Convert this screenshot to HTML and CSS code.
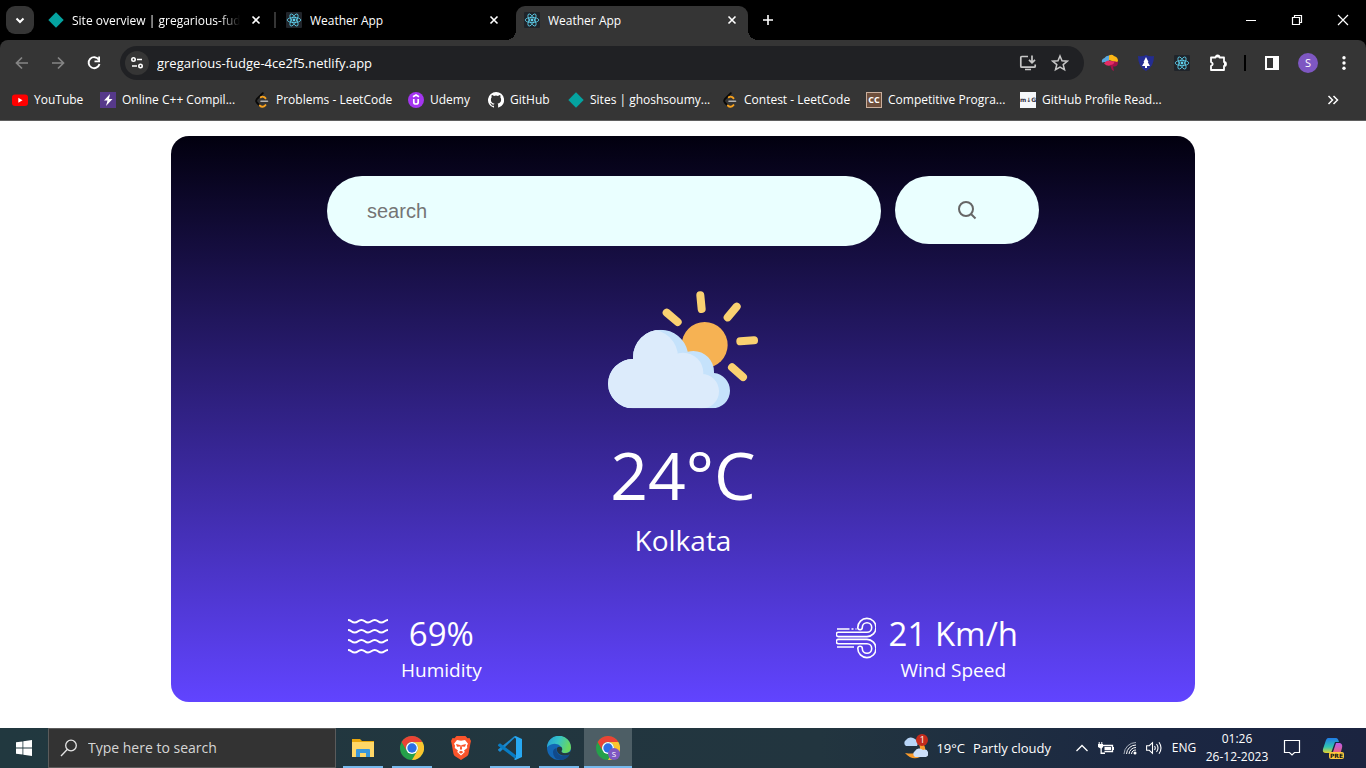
FILE: index.html
```html
<!DOCTYPE html>
<html lang="en">
<head>
<meta charset="utf-8">
<title>Weather App</title>
<link rel="stylesheet" href="styles.css">
</head>
<body>
<svg class="defs" aria-hidden="true">
  <symbol id="react" viewBox="0 0 16 16"><rect width="16" height="16" rx="1" fill="#20242a"/><g fill="none" stroke="#5fd3f0" stroke-width=".8"><ellipse cx="8" cy="8" rx="6.8" ry="2.6"/><ellipse cx="8" cy="8" rx="6.8" ry="2.6" transform="rotate(60 8 8)"/><ellipse cx="8" cy="8" rx="6.8" ry="2.6" transform="rotate(120 8 8)"/></g><circle cx="8" cy="8" r="1.4" fill="#5fd3f0"/></symbol>
  <symbol id="diamond" viewBox="0 0 16 16"><path d="M8 .3 15.7 8 8 15.7.3 8z" fill="#05a3a0"/></symbol>
  <symbol id="leet" viewBox="0 0 16 16"><g fill="none" stroke-width="1.900" stroke-linecap="round"><path d="M8.800 1.200 2.800 7.200Q1.500 9 2.800 10.500L5.500 13.300" stroke="#090909"/><path d="m11.500 6.300-1.300-1.200Q8.300 4 6.800 5.300M5.800 13.500q2.700 2.800 5.700-.4" stroke="#f5a01d"/><path d="M7 9.300h6.500" stroke="#b3b3b3" stroke-width="1.600"/></g></symbol>
  <symbol id="close" viewBox="0 0 16 16"><path d="m4.500 4.500 7 7m0-7-7 7" stroke="#fff" stroke-width="1.600"/></symbol>
  <symbol id="chrome" viewBox="0 0 24 24"><circle cx="12" cy="12" r="12" fill="#25a04a"/><path d="M1.600 6A12 12 0 0 1 22.400 6H12A6 6 0 0 0 6.800 15z" fill="#ea4335"/><path d="M22.400 6A12 12 0 0 1 12 24l5.200-9A6 6 0 0 0 12 6z" fill="#fcc52f"/><circle cx="12" cy="12" r="6" fill="#fff"/><circle cx="12" cy="12" r="4.700" fill="#2c6fe4"/></symbol>
</svg>

<header class="browser">
  <div class="tabstrip">
    <button class="tab-search" aria-label="Search tabs"><svg width="16" height="16" viewBox="0 0 16 16"><path d="m4.500 6.500 3.500 3.500 3.500-3.500" fill="none" stroke="#fff" stroke-width="2"/></svg></button>
    <div class="tab tab-divided"><svg class="fav"><use href="#diamond"/></svg><span class="tab-title tab-fade">Site overview | gregarious-fudge</span><button class="tab-close" aria-label="Close tab"><svg class="fav"><use href="#close"/></svg></button></div>
    <div class="tab"><svg class="fav"><use href="#react"/></svg><span class="tab-title">Weather App</span><button class="tab-close" aria-label="Close tab"><svg class="fav"><use href="#close"/></svg></button></div>
    <div class="tab tab-active"><svg class="fav"><use href="#react"/></svg><span class="tab-title">Weather App</span><button class="tab-close" aria-label="Close tab"><svg class="fav"><use href="#close"/></svg></button></div>
    <button class="new-tab" aria-label="New tab"><svg width="16" height="16" viewBox="0 0 16 16"><path d="M8 3v10M3 8h10" stroke="#fff" stroke-width="1.600"/></svg></button>
    <div class="window-controls">
      <button aria-label="Minimize"><svg width="12" height="12" viewBox="0 0 12 12"><path d="M1 6.500h10" stroke="#fff"/></svg></button>
      <button aria-label="Restore"><svg width="12" height="12" viewBox="0 0 12 12"><path d="M1.500 3.500h7v7h-7zM3.500 3.500v-2h7v7h-2" fill="none" stroke="#fff" stroke-width="1.200"/></svg></button>
      <button aria-label="Close"><svg width="12" height="12" viewBox="0 0 12 12"><path d="m1 1 10 10M11 1 1 11" stroke="#fff" stroke-width="1.200"/></svg></button>
    </div>
  </div>

  <div class="chrome-body">
    <div class="toolbar">
      <button class="tool" aria-label="Back"><svg width="16" height="16" viewBox="0 0 16 16"><path d="M14 8H3M8 2.500 2.500 8 8 13.500" fill="none" stroke="#858585" stroke-width="1.700"/></svg></button>
      <button class="tool" aria-label="Forward"><svg width="16" height="16" viewBox="0 0 16 16"><path d="M2 8h11M8 2.500 13.500 8 8 13.500" fill="none" stroke="#858585" stroke-width="1.700"/></svg></button>
      <button class="tool" aria-label="Reload"><svg width="16" height="16" viewBox="0 0 16 16"><path d="M12.800 4.700A5.500 5.500 0 1 0 13.500 9" fill="none" stroke="#fff" stroke-width="1.900"/><path d="M14 1.500v5.700H8.500V5.500h3.700v-4z" fill="#fff"/></svg></button>
      <div class="omnibox">
        <button class="site-info" aria-label="Site information"><svg width="16" height="16" viewBox="0 0 16 16"><g fill="none" stroke="#fff" stroke-width="1.600"><circle cx="4.500" cy="4.500" r="1.700"/><path d="M8 4.500h5M3 11h5"/><circle cx="11.500" cy="11" r="1.700"/></g></svg></button>
        <input class="address" type="text" aria-label="Address" value="gregarious-fudge-4ce2f5.netlify.app">
        <button class="omni-btn" aria-label="Install app"><svg width="18" height="18" viewBox="0 0 18 18"><path d="M9 2.500H2.800q-1 0-1 1v8.700q0 1 1 1h12.400q1 0 1-1V10.500M6 15.500h6M13 1.500v7M10 5.800l3 3 3-3" fill="none" stroke="#c7c7c7" stroke-width="1.700"/></svg></button>
        <button class="omni-btn" aria-label="Bookmark"><svg width="18" height="18" viewBox="0 0 18 18"><path d="m9 2 2 4.800 5.200.4-4 3.400 1.300 5.100L9 13l-4.500 2.700 1.300-5.100-4-3.400L7 6.800z" fill="none" stroke="#c7c7c7" stroke-width="1.500"/></svg></button>
      </div>
      <div class="extensions">
        <button class="tool" aria-label="Brain extension"><svg width="18" height="18" viewBox="0 0 18 18"><path d="M1 8.500Q0 5 3.500 4 5 1 9 1.500L8 8H4z" fill="#59a8df"/><path d="M8 1.500Q11 0 13 2q4 1 4 5-1 2-3 1L8 6z" fill="#fbb615"/><path d="M3 9.500Q6 5 9.500 7l5 .5q0 4-4 3.500-4 2-7.500-1.500z" fill="#e52c65"/><path d="M9 11q4 0 4.500-3.500L17 8q0 4-3 4.500h-2l1 4.500-2-1z" fill="#a3124b"/></svg></button>
        <button class="tool" aria-label="Shield extension"><svg width="16" height="16" viewBox="0 0 16 16"><path d="M8 0q4 2 8 1 0 11-8 15Q0 12 0 1q4 1 8-1z" fill="#242d91"/><path d="m8 2 2.500 5-.7.300L12 11 9 11v2H7v-2H4l2.200-3.700-.7-.3z" fill="#fff"/></svg></button>
        <button class="tool" aria-label="React Developer Tools"><svg class="fav"><use href="#react"/></svg></button>
        <button class="tool" aria-label="Extensions"><svg width="18" height="18" viewBox="0 0 18 18"><path d="M2 3.500h4.500a2 2 0 0 1 4 0H15V8a2 2 0 0 1 0 4v4H2v-4q3.500-2 0-4z" fill="none" stroke="#fff" stroke-width="1.800" stroke-linejoin="round"/><path d="M6.500 3.500a2 2 0 0 1 4 0zM15 8a2 2 0 0 1 0 4z" fill="#fff"/></svg></button>
        <span class="tool-divider"></span>
        <button class="tool" aria-label="Side panel"><svg width="16" height="16" viewBox="0 0 16 16"><rect x="2" y="2" width="12" height="12" fill="none" stroke="#fff" stroke-width="2"/><path d="M9 2h5v12H9z" fill="#fff"/></svg></button>
        <button class="tool" aria-label="Profile"><span class="avatar">S</span></button>
        <button class="tool" aria-label="Menu"><svg width="16" height="16" viewBox="0 0 16 16" fill="#fff"><circle cx="8" cy="2.700" r="1.700"/><circle cx="8" cy="8" r="1.700"/><circle cx="8" cy="13.300" r="1.700"/></svg></button>
      </div>
    </div>

    <nav class="bookmarks" aria-label="Bookmarks">
      <a class="bm bm-small" href="#"><svg class="fav" viewBox="0 0 16 16"><rect y="2.500" width="16" height="11.500" rx="3" fill="#f00"/><path d="m6.300 5.800 4.200 2.500-4.200 2.400z" fill="#fff"/></svg><span>YouTube</span></a>
      <a class="bm bm-wide" href="#"><svg class="fav" viewBox="0 0 16 16"><path fill="#56398a" d="M0 0h16v16H0z"/><path d="M10 2 4 8.500h3.500L6 14l6.500-7H9z" fill="#fff"/></svg><span>Online C++ Compil...</span></a>
      <a class="bm bm-wide" href="#"><svg class="fav"><use href="#leet"/></svg><span>Problems - LeetCode</span></a>
      <a class="bm bm-mini" href="#"><svg class="fav" viewBox="0 0 16 16"><circle cx="8" cy="8" r="8" fill="#a435f0"/><path d="m5 4.800 3-1.700 3 1.700M5.800 7v3.200q0 1.800 2.200 1.800t2.200-1.800V7" fill="none" stroke="#fff" stroke-width="1.700"/></svg><span>Udemy</span></a>
      <a class="bm bm-mini" href="#"><svg class="fav" viewBox="0 0 16 16"><path fill="#fff" d="M8 0a8 8 0 0 0-2.500 15.600c.4.100.5-.2.500-.4v-1.500c-2.200.5-2.700-1-2.700-1-.4-.9-.9-1.200-.9-1.200-.7-.5.100-.5.100-.5.800.1 1.200.8 1.200.8.700 1.200 1.900.9 2.300.7.100-.5.300-.9.500-1.100-1.800-.2-3.600-.9-3.600-4 0-.9.300-1.600.8-2.100-.1-.2-.4-1 .1-2.200 0 0 .7-.2 2.200.8a7.500 7.500 0 0 1 4 0c1.500-1 2.200-.8 2.200-.8.500 1.200.2 2 .1 2.200.5.500.8 1.200.8 2.100 0 3.100-1.800 3.800-3.600 4 .3.300.6.800.6 1.500v2.300c0 .2.100.5.500.4A8 8 0 0 0 8 0z"/></svg><span>GitHub</span></a>
      <a class="bm bm-wide" href="#"><svg class="fav"><use href="#diamond"/></svg><span>Sites | ghoshsoumy...</span></a>
      <a class="bm bm-medium" href="#"><svg class="fav"><use href="#leet"/></svg><span>Contest - LeetCode</span></a>
      <a class="bm bm-wide" href="#"><span class="fav fav-cc">CC</span><span>Competitive Progra...</span></a>
      <a class="bm bm-wide" href="#"><span class="fav fav-mg">m↓G</span><span>GitHub Profile Read...</span></a>
      <button class="more" aria-label="More bookmarks"><svg width="12" height="12" viewBox="0 0 12 12"><path d="m1.500 2 4 4-4 4m5-8 4 4-4 4" fill="none" stroke="#fff" stroke-width="1.500"/></svg></button>
    </nav>
  </div>
</header>

<main class="page">
  <section class="card">
    <form class="search">
      <input class="search-input" type="text" placeholder="search" aria-label="City">
      <button class="search-btn" type="button" aria-label="Search"><svg width="20" height="20" viewBox="0 0 20 20"><g fill="none" stroke="#666" stroke-width="2"><circle cx="9" cy="9" r="7"/><path d="m14 14 4.500 4.500"/></g></svg></button>
    </form>

    <svg class="sky" viewBox="54 -15 450 450" role="img" aria-label="Partly cloudy">
      <defs><clipPath id="cloud"><circle cx="128" cy="311" r="74"/><circle cx="212" cy="232" r="83"/><circle cx="310" cy="275" r="62"/><circle cx="367" cy="332" r="53"/><path d="M128 237h100l139 100v48H128z"/></clipPath></defs>
      <circle cx="344" cy="195" r="69" fill="#f6b253"/>
      <g stroke="#fad171" stroke-width="24" stroke-linecap="round"><path d="m331 46 4 41M440 80l-27 32M230 98l33 28M451 184l41-3M426 262l33 29"/></g>
      <g clip-path="url(#cloud)"><path d="M40 130h400v270H40z" fill="#c5e2fb"/><g fill="#dcebfb"><circle cx="128" cy="311" r="74"/><circle cx="180" cy="232" r="84"/><circle cx="279" cy="279" r="61"/><circle cx="335" cy="334" r="52"/><path d="M128 237h100l107 100v48H128z"/></g></g>
    </svg>

    <p class="temp">24°C</p>
    <h1 class="city">Kolkata</h1>

    <div class="stats">
      <div class="stat">
        <svg width="40" height="40" viewBox="0 0 40 40" fill="none" stroke="#fff" stroke-width="2"><path id="wave" d="M0 3c3.300 0 3.300 2.600 6.700 2.600s3.300-2.600 6.700-2.600 3.300 2.600 6.600 2.600 3.300-2.600 6.700-2.600 3.300 2.600 6.600 2.600S36.700 3 40 3"/><use href="#wave" y="10"/><use href="#wave" y="20"/><use href="#wave" y="30"/></svg>
        <div class="stat-text"><p class="value">69%</p><p class="label">Humidity</p></div>
      </div>
      <div class="stat">
        <svg width="40" height="42" viewBox="0 0 40 42" fill="none" stroke="#fff" stroke-width="1.600"><g id="gust"><path d="M31 19.600H2.500a2.200 2.200 0 0 1 0-4.400H31a4.700 4.700 0 1 0-4.700-4.700 2.200 2.200 0 0 1-4.500 0A9.100 9.100 0 1 1 31 19.600z"/></g><path d="M1 12h12.500M15.500 12h2M19.500 12h1M1 30h17"/><use href="#gust" transform="translate(0 42) scale(1 -1)"/></svg>
        <div class="stat-text"><p class="value">21 Km/h</p><p class="label">Wind Speed</p></div>
      </div>
    </div>
  </section>
</main>

<footer class="taskbar">
  <button class="start" aria-label="Start"><svg width="16" height="16" viewBox="0 0 16 16"><path d="M0 2.300 6.500 1.400v6.200H0zM7.300 1.300 16 0v7.600H7.300zM0 8.400h6.500v6.200L0 13.700zM7.300 8.400H16V16l-8.700-1.300z" fill="#fff"/></svg></button>
  <label class="task-search"><svg width="18" height="18" viewBox="0 0 18 18"><g fill="none" stroke="#e5e5e5" stroke-width="1.300"><circle cx="11" cy="6.500" r="5.300"/><path d="M7.200 10.500 1 17"/></g></svg><input type="text" placeholder="Type here to search"></label>
  <div class="apps">
    <button class="app app-open" aria-label="File Explorer"><svg width="24" height="24" viewBox="0 0 24 24"><path d="M1 3h8l2 2h12v16H1z" fill="#e9a70c"/><path d="M1 6h22v15H1z" fill="#ffd767"/><path d="M5 14q0-1 1-1h12q1 0 1 1v7h-4v-4H9v4H5z" fill="#3997dc"/></svg></button>
    <button class="app app-open" aria-label="Chrome"><svg width="24" height="24"><use href="#chrome"/></svg></button>
    <button class="app" aria-label="Brave"><svg width="24" height="24" viewBox="0 0 24 24"><path d="M7.500 0h9l2 2.300 2-.2L22 5l-.6 2.500L19.500 18q-.5 1.500-2 2.500L12 24l-5.500-3.500q-1.500-1-2-2.500L2.600 7.500 2 5l1.500-2.900 2 .2z" fill="#fb542b"/><path d="m8 4 4 .8 4-.8 3 3.800-1 1.700.2 2.500-3.200 2.500.8 1.500L12 19.500 8.200 16l.8-1.500L5.800 12 6 9.500 5 7.800z" fill="#fff"/><path d="m7 8 4 1v1.500l-3 .3zM17 8l-4 1v1.500l3 .3zM11.400 9h1.200l.5 4-1.100 1-1.100-1zM9.500 16l2.500-1.300 2.500 1.300-2.500 1.700z" fill="#fb542b"/></svg></button>
    <button class="app app-open" aria-label="Visual Studio Code"><svg width="24" height="24" viewBox="0 0 24 24"><path d="M17.500 1 2 16l-2-1.700V13.500L16 .5z" fill="#1b8ad0"/><path d="m17.500 23-17.500-13.300V8.800L2 7.200l16 12z" fill="#087cc4"/><path d="m17.500 0 6.500 3v18l-6.500 3-1.500-.7 2-2V2.700l-2-2z" fill="#27a8f2"/></svg></button>
    <button class="app app-open" aria-label="Edge"><svg width="24" height="24" viewBox="0 0 24 24"><defs><linearGradient id="edge" x2="1" y2=".3"><stop stop-color="#229bd9"/><stop offset=".5" stop-color="#35c3c7"/><stop offset="1" stop-color="#68d860"/></linearGradient></defs><circle cx="12" cy="12" r="12" fill="#1366b4"/><path d="M0 11.500A12 12 0 0 1 24 12q-.5 5-6 5-4 0-3.500-2 1.500-2 0-4Q10 6 4 8.500 1 9.500 0 11.500z" fill="url(#edge)"/><path d="M9.500 12Q9 20 17 20q3 0 6-2-3 6-9.500 6Q6 23 6 16q0-3 3.500-4z" fill="#114a8b"/><path d="M10 12q1.500-2 4.500-.8 1.500 2 0 3.800-.5 2 3.500 2.300 3 .2 6-2L23.300 18q-3.300 2-7.300 1.500Q9 18 10 12z" fill="#24383f"/></svg></button>
    <button class="app app-open app-active" aria-label="Chrome, profile S"><svg width="24" height="24"><use href="#chrome"/></svg><span class="app-badge">S</span></button>
  </div>

  <div class="tray">
    <button class="tray-weather"><span class="moon"><svg width="26" height="24" viewBox="0 0 26 24"><path d="M17 8q5 12-14 9 7 8 15 4 8-5 4-12z" fill="#f99b2c"/><path d="M4 10a3.500 3.500 0 0 1 0-6 6 6 0 0 1 9-1 5 5 0 0 1 2 7z" fill="#b8d5f7"/><path d="M13 21a3.500 3.500 0 0 1 0-6 5 5 0 0 1 8-1 3.600 3.600 0 0 1 3 7z" fill="#cce0fb"/></svg><span class="alert">1</span></span><span>19°C</span><span>Partly cloudy</span></button>
    <button class="tray-icon" aria-label="Show hidden icons"><svg width="12" height="8" viewBox="0 0 12 8"><path d="m.5 7 5.500-5.500L11.500 7" fill="none" stroke="#fff" stroke-width="1.300"/></svg></button>
    <button class="tray-icon" aria-label="Battery"><svg width="16" height="14" viewBox="0 0 16 14"><path d="M4.500 4.500h10v6h-8M15.500 6v3" fill="none" stroke="#fff" stroke-width="1.300"/><path d="M6.500 6h6.500v3H6.500zM0 3h5v3L3.800 7.500v4H7V13H2.500V7.500L0 6zM.7 1h1v2h-1zM3.300 1h1v2h-1z" fill="#fff"/></svg></button>
    <button class="tray-icon" aria-label="Network"><svg width="14" height="14" viewBox="0 0 14 14"><g fill="none" stroke="#fff"><path d="M1 13A12 12 0 0 1 13 1.500" stroke="#a5adba"/><path d="M3.500 13A9.500 9.500 0 0 1 13 4M6 13a7 7 0 0 1 7-6.500M8.500 13A4.500 4.500 0 0 1 13 9"/></g><circle cx="12" cy="12" r="1.500" fill="#fff"/></svg></button>
    <button class="tray-icon" aria-label="Volume"><svg width="17" height="14" viewBox="0 0 17 14"><path d="M.6 4.700h2.700l3.200-3v10.600l-3.200-3H.6zM8.500 5q1.500 2 0 4m2-6q3 4 0 8m2.500-9.700q4 5.700 0 11.400" fill="none" stroke="#fff" stroke-width="1.100"/></svg></button>
    <button class="lang">ENG</button>
    <button class="clock"><time>01:26</time><time>26-12-2023</time></button>
    <button class="notify" aria-label="Notifications"><svg width="18" height="18" viewBox="0 0 18 18"><path d="M1.500 1.500h15v12h-5L9 16l-2.500-2.500h-5z" fill="none" stroke="#fff" stroke-width="1.200"/></svg></button>
    <button class="copilot" aria-label="Copilot preview"><svg width="22" height="20" viewBox="0 0 22 20"><defs><linearGradient id="co1" x2="0" y2="1"><stop stop-color="#207be8"/><stop offset=".6" stop-color="#31c6b0"/><stop offset="1" stop-color="#e8d12c"/></linearGradient><linearGradient id="co2" x2="0" y2="1"><stop stop-color="#bd5bea"/><stop offset="1" stop-color="#f4655e"/></linearGradient></defs><path d="M6 0h8q2 0 3 4h-4L9 15H4q-4 0-3-4L4 2q1-2 2-2z" fill="url(#co1)"/><path d="M14 5h4q3 1 2 5l-2 7h-8z" fill="url(#co2)"/></svg><span class="pre">PRE</span></button>
  </div>
</footer>
</body>
</html>
```
FILE: styles.css
```css
* { box-sizing: border-box; }

body {
  margin: 0;
  min-height: 100vh;
  display: flex;
  flex-direction: column;
  background: #fff;
  color: #fff;
  font: 12px/16px "Open Sans", "Noto Sans", sans-serif;
}

p, h1 { margin: 0; font-weight: 400; }
svg { display: block; flex: none; }

button, input {
  margin: 0;
  padding: 0;
  border: 0;
  background: none;
  color: inherit;
  font: inherit;
  outline: 0;
}

button {
  display: flex;
  align-items: center;
  justify-content: center;
  flex: none;
}

.defs { position: absolute; width: 0; height: 0; }
.fav { width: 16px; height: 16px; flex: none; }

/* Tab strip */
.browser { background: #000; }
.tabstrip { display: flex; align-items: flex-end; height: 40px; padding-left: 6px; }
.tab-search {
  width: 28px;
  height: 28px;
  margin: 0 6px 6px 0;
  border-radius: 9px;
  background: #353535;
}
.tab {
  position: relative;
  display: flex;
  align-items: center;
  gap: 8px;
  width: 232px;
  height: 34px;
  margin-right: 6px;
  padding: 0 8px 6px;
}
.tab-divided::after {
  content: "";
  position: absolute;
  right: -4px;
  top: 6px;
  width: 2px;
  height: 16px;
  background: #353535;
}
.tab-title { flex: 1; overflow: hidden; white-space: nowrap; line-height: 18px; padding-top: 1px; }
.tab-fade { mask-image: linear-gradient(90deg, #000 88%, transparent); }
.tab-active { background: #353535; border-radius: 9px 9px 0 0; }
.tab-active::before,
.tab-active::after {
  content: "";
  position: absolute;
  bottom: 0;
  width: 10px;
  height: 10px;
}
.tab-active::before { left: -10px; background: radial-gradient(circle at 0 0, #000 10px, #353535 10px); }
.tab-active::after { right: -10px; background: radial-gradient(circle at 100% 0, #000 10px, #353535 10px); }
.new-tab { width: 28px; height: 28px; margin-bottom: 6px; }
.window-controls { display: flex; margin-left: auto; }
.window-controls button { width: 46px; height: 40px; }

/* Toolbar */
.chrome-body { background: #353535; border-radius: 8px 8px 0 0; border-bottom: 1px solid #5f5f5f; }
.toolbar { display: flex; align-items: center; height: 46px; padding: 0 4px; }
.tool { width: 36px; height: 34px; }
.omnibox {
  display: flex;
  align-items: center;
  flex: 1;
  height: 34px;
  margin: 0 8px;
  padding: 0 8px 0 5px;
  border-radius: 17px;
  background: #202124;
}
.site-info { width: 24px; height: 24px; border-radius: 12px; background: #353535; }
.address { flex: 1; min-width: 0; margin-left: 8px; font-size: 13px; }
.omni-btn { width: 32px; height: 32px; }
.extensions { display: flex; align-items: center; }
.tool-divider { width: 2px; height: 16px; margin: 0 8px; background: #000; }
.avatar {
  width: 20px;
  border-radius: 10px;
  background: #7e57c2;
  font-size: 11px;
  line-height: 20px;
}

/* Bookmarks */
.bookmarks { display: flex; align-items: center; height: 34px; padding: 0 23px 6px 12px; }
.bm {
  display: flex;
  align-items: center;
  gap: 6px;
  color: #fff;
  text-decoration: none;
  white-space: nowrap;
}
.bm-mini { width: 80px; }
.bm-small { width: 88px; }
.bm-medium { width: 144px; }
.bm-wide { width: 154px; }
.more { margin-left: auto; width: 20px; height: 20px; }
.fav-cc {
  border: 1px solid #c9ae9c;
  background: #6e4f3c;
  font: 700 9px/14px "Open Sans", sans-serif;
  text-align: center;
}
.fav-mg {
  background: #f5f7fa;
  color: #334;
  font: 700 6px/16px "DejaVu Sans", sans-serif;
  text-align: center;
}

/* Weather card */
.page { flex: 1; padding: 15px 0 26px; }
.card {
  display: flex;
  flex-direction: column;
  align-items: center;
  width: 75%;
  min-height: 100%;
  margin: 0 auto;
  padding: 40px 20px 16px;
  border-radius: 18px;
  background: linear-gradient(#02000f, #6144ff);
}
.search { display: flex; gap: 14px; }
.search-input {
  width: 554px;
  height: 70px;
  padding-left: 40px;
  border-radius: 35px;
  background: #eaffff;
  color: #555;
  font: 20px "Liberation Sans", Arial, sans-serif;
}
.search-input::placeholder { color: #757575; }
.search-btn { width: 144px; height: 68px; border-radius: 34px; background: #eaffff; }
.sky { width: 150px; height: 150px; margin-top: 29px; }
.temp { margin-top: 5px; font-size: 66px; line-height: 88px; }
.city { margin-top: 2px; font-size: 28px; line-height: 40px; }
.stats {
  display: flex;
  justify-content: space-between;
  width: 100%;
  max-width: 670px;
  margin-top: 54px;
}
.stat { display: flex; gap: 13px; }
.stat > svg { margin-top: 3px; }
.stat-text { text-align: center; }
.value { font-size: 33px; line-height: 40px; }
.label { font-size: 19px; line-height: 32px; }

/* Taskbar */
.taskbar {
  display: flex;
  height: 40px;
  background: linear-gradient(90deg, #21383f, #22353f 60%, #1b2742 85%, #1b2440);
}
.start { width: 48px; }
.task-search {
  display: flex;
  align-items: center;
  gap: 10px;
  width: 288px;
  padding-left: 11px;
  border: 1px solid #5b5b5b;
  background: #333;
}
.task-search input { flex: 1; min-width: 0; font-size: 14px; }
.task-search input::placeholder { color: #d6d6d6; }
.apps { display: flex; gap: 1px; margin-left: 3px; }
.app { position: relative; width: 48px; }
.app-open::after {
  content: "";
  position: absolute;
  inset: auto 4px 0;
  height: 2px;
  background: #76b9ed;
}
.app-active { background: #4d5e65; }
.app-active::after { inset: auto 0 0; }
.app-badge {
  position: absolute;
  right: 12px;
  bottom: 8px;
  width: 12px;
  border-radius: 6px;
  background: #7e57c2;
  font-size: 8px;
  line-height: 12px;
}
.tray { display: flex; align-items: stretch; margin-left: auto; padding-right: 22px; }
.tray-weather { gap: 8px; margin-right: 19px; font-size: 13px; }
.moon { position: relative; }
.alert {
  position: absolute;
  right: 0;
  top: -2px;
  width: 12px;
  border-radius: 6px;
  background: #c42b1c;
  font-size: 9px;
  line-height: 12px;
}
.tray-icon { width: 24px; }
.lang { width: 36px; }
.clock { flex-direction: column; width: 70px; line-height: 18px; }
.notify { width: 40px; }
.copilot { position: relative; width: 22px; margin-left: 10px; }
.pre {
  position: absolute;
  right: 0;
  bottom: 9px;
  padding: 0 1px;
  border-radius: 2px;
  background: #ffc83d;
  color: #111;
  font: 700 6px/7px "DejaVu Sans", sans-serif;
}
```
